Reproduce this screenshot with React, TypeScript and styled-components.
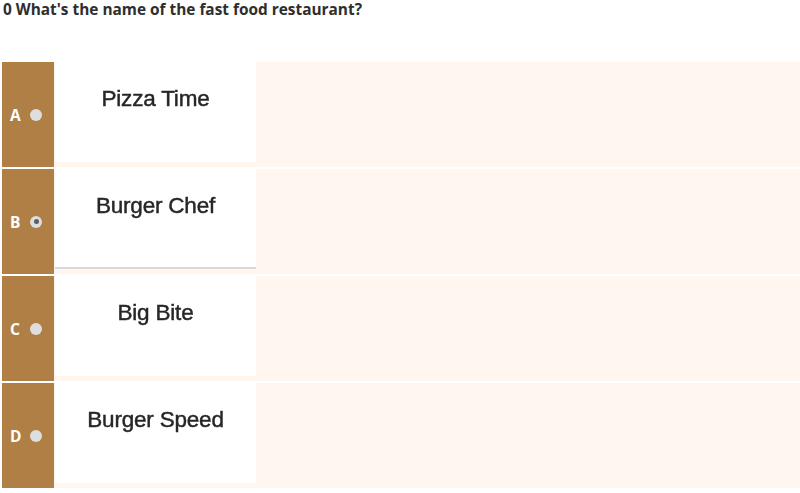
import styled, { createGlobalStyle } from 'styled-components'

const GlobalStyle = createGlobalStyle`
  html, body {
    margin: 0;
    padding: 0;
    background: #ffffff;
  }
  body {
    font-family: 'Open Sans', 'Liberation Sans', sans-serif;
  }
`

interface IOption {
  letter: string;
  name: string;
  selected?: boolean;
}

const options: IOption[] = [
  { letter: 'A', name: 'Pizza Time' },
  { letter: 'B', name: 'Burger Chef', selected: true },
  { letter: 'C', name: 'Big Bite' },
  { letter: 'D', name: 'Burger Speed' },
]

const App = () => {
  return (
    <Page>
      <GlobalStyle />
      <Question>0 What's the name of the fast food restaurant?</Question>

      <Options>
        {options.map(o => (
          <OptionRow key={o.letter}>
            <LetterBar>
              <span>{o.letter}</span>
              <Radio selected={!!o.selected} />
            </LetterBar>
            <Picture underlined={!!o.selected}>
              <PictureText>{o.name}</PictureText>
            </Picture>
          </OptionRow>
        ))}
      </Options>
    </Page>
  )
}

export default App;

const Page = styled.main`
  width: 800px;
  height: 493px;
  overflow: hidden;
  padding: 0 0 0 2px;
  box-sizing: border-box;
`

const Question = styled.h1`
  margin: 0 0 0 1px;
  color: #2e2e2e;
  font-size: 15.4px;
  font-weight: 700;
  line-height: 20px;
`

const Options = styled.section`
  display: flex;
  flex-direction: column;
  gap: 2px;
  margin-top: 42px;
`

const OptionRow = styled.div`
  display: flex;
  height: 105px;
  background: #fef6ef;
`

const LetterBar = styled.div`
  width: 52px;
  flex-shrink: 0;
  background: #b07f46;
  display: flex;
  align-items: center;
  padding-left: 8px;
  box-sizing: border-box;
  gap: 9px;

  span {
    color: #ffffff;
    font-size: 15.5px;
    font-weight: 700;
    line-height: 16px;
    width: 11px;
  }
`

const Radio = styled.div<{ selected: boolean }>`
  width: 12px;
  height: 12px;
  border-radius: 50%;
  background: #dedede;
  position: relative;

  ${props => props.selected && `
    &::after {
      content: '';
      position: absolute;
      left: 3.5px;
      top: 3.5px;
      width: 5px;
      height: 5px;
      border-radius: 50%;
      background: #5f5f5f;
    }
  `}
`

const Picture = styled.div<{ underlined: boolean }>`
  width: 201px;
  height: 100px;
  margin-left: 1px;
  background: #ffffff;
  display: flex;
  justify-content: center;
  box-sizing: border-box;
  ${props => props.underlined && 'border-bottom: 2px solid #d8d8d8;'}
`

const PictureText = styled.div`
  font-family: 'Liberation Sans', Arial, sans-serif;
  font-size: 22.5px;
  color: #262626;
  -webkit-text-stroke: 0.45px #262626;
  letter-spacing: -0.2px;
  margin-top: 24px;
  line-height: 26px;
  height: 26px;
  filter: blur(0.35px);
`
